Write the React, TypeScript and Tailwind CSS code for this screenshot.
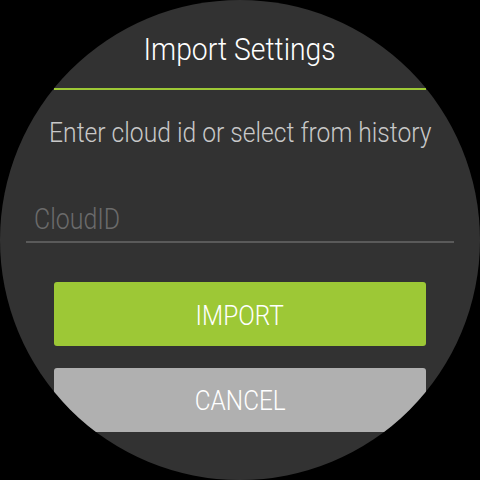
import React from "react";

export default function App() {
  const font = { fontFamily: "Roboto, 'Noto Sans', sans-serif" };
  return (
    <div className="w-[480px] h-[480px] bg-black" style={font}>
      <div className="w-[480px] h-[480px] rounded-full bg-[#323232] overflow-hidden flex flex-col items-center">
        <div className="mt-[33px] text-[32px] leading-none font-light text-white whitespace-nowrap scale-x-[0.885]">
          Import Settings
        </div>
        <div className="mt-[23px] w-[372px] h-[2px] bg-[#9dc836]" />
        <div className="mt-[29px] text-[28px] leading-none font-light text-[#c8c8c8] whitespace-nowrap scale-x-[0.88]">
          Enter cloud id or select from history
        </div>
        <div className="mt-[57px] w-[428px] flex flex-col">
          <div className="pl-[8px] h-[30px] text-[30px] leading-none font-light text-[#6b6b6b] whitespace-nowrap">
            <span className="inline-block origin-left scale-x-[0.83]">CloudID</span>
          </div>
          <div className="mt-[7px] h-[2px] bg-[#5a5a5a]" />
        </div>
        <div className="mt-[39px] w-[372px] h-[64px] rounded-[3px] bg-[#9dc836] flex justify-center pt-[20px]">
          <span className="text-[28px] leading-none font-light text-white scale-x-[0.87] inline-block h-[28px]">IMPORT</span>
        </div>
        <div className="mt-[22px] w-[372px] h-[64px] rounded-[3px] bg-[#b0b0b0] flex justify-center pt-[19px] shrink-0">
          <span className="text-[28px] leading-none font-light text-white scale-x-[0.87] inline-block h-[28px]">CANCEL</span>
        </div>
      </div>
    </div>
  );
}
